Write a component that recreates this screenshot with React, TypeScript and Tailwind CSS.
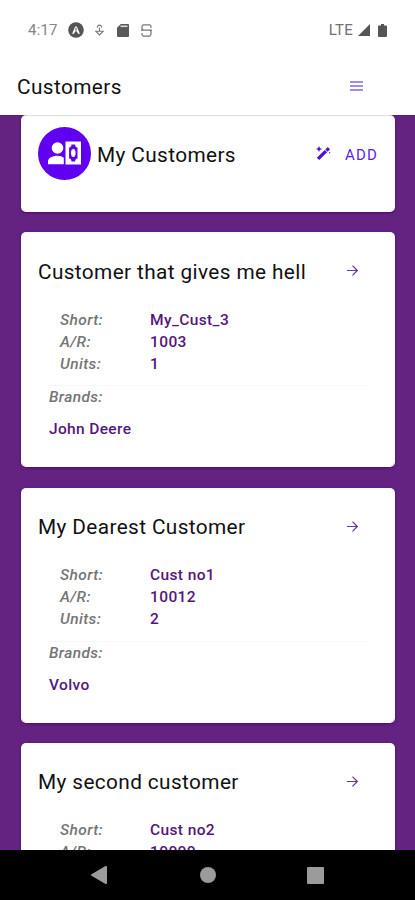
import type { ReactNode } from "react";

type Customer = {
  name: string;
  short: string;
  ar: string;
  units: number;
  brands: string;
};

const CUSTOMERS: Customer[] = [
  { name: "Customer that gives me hell", short: "My_Cust_3", ar: "1003", units: 1, brands: "John Deere" },
  { name: "My Dearest Customer", short: "Cust no1", ar: "10012", units: 2, brands: "Volvo" },
  { name: "My second customer", short: "Cust no2", ar: "10000", units: 2, brands: "Volvo" }
];

function StatusBar() {
  return (
    <div className="flex h-[60px] items-center justify-between pr-7 pl-7">
      <div className="flex items-center">
        <span className="w-[40px] text-[15px] tracking-[0.2px] text-[#858585]">4:17</span>
        <svg className="h-4 w-4" viewBox="0 0 16 16">
          <circle cx="8" cy="8" r="7.8" fill="#555" />
          <path d="M4.2 11.6 7.2 4.6h1.6l3 7-1.2.6L8 8.8l-2.6 3.4z" fill="#fff" />
          <path d="M8 5.8v3" stroke="#555" strokeWidth="1" />
        </svg>
        <svg className="ml-[11px] h-[13px] w-[9px]" viewBox="0 0 9 13" fill="none" stroke="#777" strokeWidth="1.1">
          <path d="M2.6 3.7a2 2 0 1 1 3.8 0M.8 7.2h7.4L4.5 11zM4.5 3.6v3.6" />
        </svg>
        <svg className="ml-[13px] h-[13px] w-3" viewBox="0 0 12 13">
          <path d="M3.8 0H11a1 1 0 0 1 1 1v11a1 1 0 0 1-1 1H1a1 1 0 0 1-1-1V3.8z" fill="#5a5a5a" />
          <path d="M3.5 2.3h7" stroke="#ddd" strokeWidth="1.6" />
        </svg>
        <svg className="ml-3 h-[13px] w-[11px]" viewBox="0 0 11 13" fill="none" stroke="#777" strokeWidth="1.2">
          <path d="M10 4V2.2L8.8.8H2.2L1 2.2v2.6l1.2 1.3h6.6L10 7.4v3.2l-1.2 1.5H2.2L1 10.6V9M0 6.1h11" />
        </svg>
      </div>
      <div className="flex items-center">
        <span className="text-[15px] tracking-[0.2px] text-[#717171]">LTE</span>
        <svg className="ml-[5px] h-3 w-3" viewBox="0 0 12 12">
          <path d="M12 0v12H0z" fill="#555" />
        </svg>
        <svg className="ml-2 h-[13px] w-[9px]" viewBox="0 0 9 13">
          <path d="M3 0h3v1.5h2a1 1 0 0 1 1 1V12a1 1 0 0 1-1 1H1a1 1 0 0 1-1-1V2.5a1 1 0 0 1 1-1h2z" fill="#555" />
        </svg>
      </div>
    </div>
  );
}

function AppBar() {
  return (
    <header className="relative z-10 h-[115px] shrink-0 bg-white shadow-[0_1px_1px_rgba(0,0,0,0.12)]">
      <StatusBar />
      <div className="flex h-[54px] items-center justify-between pr-[52px] pl-[17px]">
        <h1 className="pt-[2px] text-[20.8px] tracking-[0.4px] text-[#111]">Customers</h1>
        <button type="button" aria-label="Menu">
          <svg className="mb-[2px] h-[10px] w-[13px]" viewBox="0 0 13 10" stroke="#8463e3" strokeWidth="1.3">
            <path d="M0 1h13M0 5h13M0 9h13" />
          </svg>
        </button>
      </div>
    </header>
  );
}

function AccountCashIcon() {
  return (
    <svg className="h-[53px] w-[53px]" viewBox="0 0 53 53">
      <circle cx="26.5" cy="26.5" r="26.5" fill="#5f00f0" />
      <circle cx="19.5" cy="21" r="5.8" fill="#fff" />
      <path d="M10 37.3v-2.8c0-3.5 4.5-5.7 9.500-5.700 3 0 5 .8 6.300 2v6.500zM27.500 14.500H43v23H27.500z" fill="#fff" />
      <path d="M33.5 17.5h3.6c0 1.9 1 3 2.4 3v11c-1.4 0-2.400 1.100-2.400 3h-3.600c0-1.900-1-3-2.400-3v-11c1.400 0 2.400-1.100 2.400-3z" fill="#5f00f0" />
      <ellipse cx="35.3" cy="26" rx="2.3" ry="4" fill="#fff" />
    </svg>
  );
}

function WandIcon() {
  return (
    <svg className="mb-[2px] h-[14px] w-[15px]" viewBox="0 0 15 14" fill="#4b12dc">
      <path d="M3 0l.9 2.1L6 3l-2.1.9L3 6l-.9-2.1L0 3l2.1-.9zM.8 11.8 8.8 4l2.3 2.2L3.2 14z" />
      <path d="m9.300 3.500 2.500-2.500L14 3.200l-2.400 2.500zM12.900 5.900l1.600.5-1.300 1.300z" />
    </svg>
  );
}

function Card({ children, className }: { children: ReactNode; className: string }) {
  return (
    <section className={`shrink-0 rounded-[5px] bg-white shadow-[0_1px_3px_rgba(70,0,100,0.8)] ${className}`}>
      {children}
    </section>
  );
}

function Detail({ label, value }: { label: string; value: string | number }) {
  return (
    <div className="flex h-[22px] items-center">
      <dt className="w-[90px] font-medium text-[#757575] italic">{label}</dt>
      <dd className="font-medium text-[#55167c]">{value}</dd>
    </div>
  );
}

function CustomerCard({ customer }: { customer: Customer }) {
  return (
    <Card className="h-[235px] pr-[27px] pl-[17px]">
      <div className="flex h-[77px] items-center justify-between pr-[10px]">
        <h2 className="pt-[3px] text-[20.8px] tracking-[0.38px] text-[#111]">{customer.name}</h2>
        <svg className="h-[11px] w-[11px]" viewBox="0 0 11 11" fill="none" stroke="#6d3595" strokeWidth="1.2">
          <path d="M0 5.5h10M5.5.7l4.8 4.8-4.8 4.8" />
        </svg>
      </div>
      <dl className="pl-[22px] text-[15.5px] tracking-[0.38px]">
        <Detail label="Short:" value={customer.short} />
        <Detail label="A/R:" value={customer.ar} />
        <Detail label="Units:" value={customer.units} />
      </dl>
      <div className="mt-[10px] ml-[11px] border-t border-[#f7f7f7] text-[15.5px] font-medium tracking-[0.35px]">
        <p className="leading-[22px] text-[#757575] italic">Brands:</p>
        <p className="mt-[10px] leading-[22px] text-[#55167c]">{customer.brands}</p>
      </div>
    </Card>
  );
}

function NavigationBar() {
  return (
    <nav className="relative z-10 flex h-[50px] shrink-0 items-center justify-between bg-black px-[91px]">
      <svg className="h-[18px] w-4" viewBox="0 0 16 18" fill="#9b9b9b">
        <path d="M15 0a1 1 0 0 1 1 1v16a1 1 0 0 1-1.5.9L.5 9.8a1 1 0 0 1 0-1.6L14.5.1z" />
      </svg>
      <span className="ml-[1px] h-4 w-4 rounded-full bg-[#9b9b9b]" />
      <span className="h-[17px] w-[17px] rounded-[1px] bg-[#9b9b9b]" />
    </nav>
  );
}

export default function App() {
  return (
    <div className="flex h-[900px] w-[415px] flex-col overflow-hidden bg-[#642381] font-['Roboto',sans-serif]">
      <AppBar />
      <main className="flex min-h-0 flex-1 flex-col gap-[20.1px] overflow-hidden pr-[20px] pl-[21px]">
        <Card className="h-[97.4px] px-[17px] pt-[12px]">
          <div className="flex h-[53px] items-center">
            <AccountCashIcon />
            <h2 className="ml-[6px] pt-[4px] text-[20.8px] tracking-[0.38px] text-[#111]">My Customers</h2>
            <button type="button" className="ml-auto flex items-center gap-[14px] pt-[1px] text-[#5a24e3]">
              <WandIcon />
              <span className="pt-[2px] text-[15px] tracking-[1.2px]">ADD</span>
            </button>
          </div>
        </Card>
        {CUSTOMERS.map((customer) => (
          <CustomerCard key={customer.name} customer={customer} />
        ))}
      </main>
      <NavigationBar />
    </div>
  );
}
